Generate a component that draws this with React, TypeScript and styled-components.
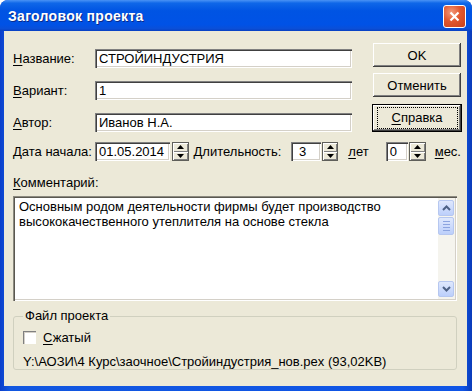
import React from "react";
import styled, { createGlobalStyle } from "styled-components";

const GlobalStyle = createGlobalStyle`
  html, body {
    margin: 0;
    padding: 0;
    background: #ffffff;
  }
  body {
    font-family: "Liberation Sans", Arial, sans-serif;
    font-size: 13px;
    color: #000;
  }
`;

const colors = {
  face: "#ECE9D8",
  shadow: "#808080",
  dark: "#404040",
  light: "#ffffff",
  groupLine: "#d0d0bf",
};

const Window = styled.div`
  width: 472px;
  height: 391px;
  box-sizing: border-box;
  display: flex;
  flex-direction: column;
  background: linear-gradient(to right, #0b3fcb 0%, #1257e0 2%, #0f55e6 98%, #0a3bb8 100%);
  border-radius: 8px 8px 0 0;
  overflow: hidden;
`;

const TitleBar = styled.div`
  height: 31px;
  flex-shrink: 0;
  display: flex;
  align-items: center;
  justify-content: space-between;
  padding: 0 6px 0 8px;
  background: linear-gradient(
    to bottom,
    #4a93f5 0%,
    #0f67e8 10%,
    #0054e3 35%,
    #0052e6 80%,
    #0a4fd8 92%,
    #0840c2 100%
  );
`;

const Title = styled.span`
  color: #fff;
  font-weight: bold;
  font-size: 14px;
  letter-spacing: 0.3px;
  text-shadow: 1px 1px 0 #0a2a8a;
`;

const CloseButton = styled.div`
  width: 21px;
  height: 21px;
  border: 1px solid #fff;
  border-radius: 3px;
  background: radial-gradient(circle at 35% 30%, #f39a7c 0%, #e2572f 45%, #c8401b 100%);
  display: flex;
  align-items: center;
  justify-content: center;
  margin-top: 2px;
`;

const Client = styled.div`
  flex: 1;
  margin: 0 5px 5px 4px;
  background: ${colors.face};
  padding: 12px 6px 0 9px;
  display: flex;
  flex-direction: column;
`;

const TopSection = styled.div`
  display: flex;
  gap: 21px;
`;

const Fields = styled.div`
  flex: 1;
  display: flex;
  flex-direction: column;
  gap: 14px;
  padding-top: 6px;
`;

const Row = styled.div`
  display: flex;
  align-items: center;
  height: 18px;
`;

const Label = styled.span<{ $width?: number }>`
  width: ${(p) => (p.$width ? `${p.$width}px` : "auto")};
  flex-shrink: 0;
  white-space: nowrap;
  line-height: 15px;
`;

const U = styled.span`
  text-decoration: underline;
  text-underline-offset: 2px;
`;

const Field = styled.div<{ $width?: number }>`
  ${(p) => (p.$width ? `width: ${p.$width}px;` : "flex: 1;")}
  height: 19px;
  box-sizing: border-box;
  background: #fff;
  padding: 2px 0 0 4px;
  white-space: nowrap;
  overflow: hidden;
  box-shadow: inset 1px 1px 0 ${colors.shadow}, inset 2px 2px 0 ${colors.dark},
    inset -1px -1px 0 ${colors.light}, inset -2px -2px 0 #d4d0c8;
`;

const Buttons = styled.div`
  width: 88px;
  display: flex;
  flex-direction: column;
  gap: 6px;
`;

const Button = styled.div<{ $focused?: boolean }>`
  height: 24px;
  box-sizing: border-box;
  display: flex;
  align-items: center;
  justify-content: center;
  background: ${colors.face};
  box-shadow: inset -1px -1px 0 ${colors.dark}, inset 1px 1px 0 ${colors.light},
    inset -2px -2px 0 ${colors.shadow};
  ${(p) =>
    p.$focused &&
    `
    outline: 1px solid #000;
    outline-offset: 0;
    margin-top: 2px;
    height: 26px;
  `}
`;

const FocusRing = styled.span`
  border: 1px dotted #000;
  padding: 2px 14px 3px;
`;

const DateRow = styled(Row)`
  margin-top: 11px;
  height: 19px;
`;

const Spin = styled.div<{ $gap?: number }>`
  width: 17px;
  height: 19px;
  margin-left: ${(p) => p.$gap ?? 1}px;
  display: flex;
  flex-direction: column;
  box-sizing: border-box;
  border: 1px solid #5f5f5a;
  background: ${colors.face};
`;

const SpinHalf = styled.div`
  flex: 1;
  display: flex;
  align-items: center;
  justify-content: center;
  box-shadow: inset 1px 1px 0 ${colors.light}, inset -1px -1px 0 ${colors.shadow};
`;

const Gap = styled.span<{ $w: number }>`
  display: inline-block;
  width: ${(p) => p.$w}px;
  flex-shrink: 0;
`;

const CommentLabel = styled.div`
  margin-top: 14px;
  line-height: 15px;
  margin-bottom: 6px;
`;

const TextBox = styled.div`
  height: 105px;
  margin-right: 4px;
  display: flex;
  background: #fff;
  box-sizing: border-box;
  padding: 2px;
  box-shadow: inset 1px 1px 0 #8c8a80, inset 2px 2px 0 #5a5850,
    inset -1px -1px 0 ${colors.light}, inset -2px -2px 0 #d4d0c8;
`;

const TextContent = styled.div`
  flex: 1;
  padding: 1px 4px;
  line-height: 15px;
`;

const ScrollBar = styled.div`
  width: 17px;
  display: flex;
  flex-direction: column;
  background: #f5f4ee;
  padding: 2px 0;
`;

const ScrollBtn = styled.div`
  width: 16px;
  height: 16px;
  box-sizing: border-box;
  border: 1px solid #b6c7f0;
  border-radius: 2px;
  background: linear-gradient(to bottom, #dfe8fd, #bccffb);
  display: flex;
  align-items: center;
  justify-content: center;
`;

const Thumb = styled(ScrollBtn)`
  height: 18px;
  margin-top: 1px;
  flex-direction: column;
  gap: 2px;
`;

const Grip = styled.span`
  width: 7px;
  height: 1px;
  background: #8ca4e0;
`;

const Track = styled.div`
  flex: 1;
`;

const Group = styled.fieldset`
  margin: 8px 4px 0 0;
  padding: 7px 9px 0;
  border: 1px solid ${colors.groupLine};
  border-radius: 3px;
  display: flex;
  flex-direction: column;
  gap: 9px;
`;

const Legend = styled.legend`
  padding: 0 2px;
  line-height: 14px;
`;

const CheckRow = styled.div`
  display: flex;
  align-items: center;
  gap: 7px;
  height: 15px;
`;

const CheckBox = styled.span`
  width: 13px;
  height: 13px;
  box-sizing: border-box;
  background: #fff;
  box-shadow: inset 1px 1px 0 ${colors.shadow}, inset 2px 2px 0 #d4d0c8,
    inset -1px -1px 0 ${colors.light};
`;

const PathText = styled.div`
  line-height: 15px;
  white-space: nowrap;
`;

const Chevron = ({ up }: { up?: boolean }) => (
  <svg width="9" height="6" viewBox="0 0 9 6">
    <path
      d={up ? "M1 5 L4.5 1.5 L8 5" : "M1 1 L4.5 4.5 L8 1"}
      stroke="#4d6185"
      strokeWidth="2"
      fill="none"
    />
  </svg>
);

const Tri = ({ up }: { up?: boolean }) => (
  <svg width="7" height="4" viewBox="0 0 7 4">
    <path d={up ? "M0 4 L3.5 0 L7 4 Z" : "M0 0 L3.5 4 L7 0 Z"} fill="#000" />
  </svg>
);

const Spinner = ({ gap }: { gap?: number }) => (
  <Spin $gap={gap}>
    <SpinHalf>
      <Tri up />
    </SpinHalf>
    <SpinHalf>
      <Tri />
    </SpinHalf>
  </Spin>
);

export default function App() {
  return (
    <>
      <GlobalStyle />
      <Window>
        <TitleBar>
          <Title>Заголовок проекта</Title>
          <CloseButton>
            <svg width="11" height="11" viewBox="0 0 11 11">
              <path d="M1.5 1.5 L9.5 9.5 M9.5 1.5 L1.5 9.5" stroke="#fff" strokeWidth="2.2" />
            </svg>
          </CloseButton>
        </TitleBar>
        <Client>
          <TopSection>
            <Fields>
              <Row>
                <Label $width={82}>
                  <U>Н</U>азвание:
                </Label>
                <Field>СТРОЙИНДУСТРИЯ</Field>
              </Row>
              <Row>
                <Label $width={82}>
                  <U>В</U>ариант:
                </Label>
                <Field>1</Field>
              </Row>
              <Row>
                <Label $width={82}>
                  <U>А</U>втор:
                </Label>
                <Field>Иванов Н.А.</Field>
              </Row>
            </Fields>
            <Buttons>
              <Button>OK</Button>
              <Button>Отменить</Button>
              <Button $focused>
                <FocusRing>
                  <U>С</U>правка
                </FocusRing>
              </Button>
            </Buttons>
          </TopSection>

          <DateRow>
            <Label $width={82}>
              <U>Д</U>ата начала:
            </Label>
            <Field $width={77}>01.05.2014</Field>
            <Spinner gap={2} />
            <Gap $w={5} />
            <Label>Длительность:</Label>
            <Gap $w={10} />
            <Field $width={30}>&nbsp;3</Field>
            <Spinner />
            <Gap $w={10} />
            <Label>
              <U>л</U>ет
            </Label>
            <Gap $w={17} />
            <Field $width={23}>0</Field>
            <Spinner />
            <Gap $w={9} />
            <Label>
              <U>м</U>ес.
            </Label>
          </DateRow>

          <CommentLabel>
            <U>К</U>омментарий:
          </CommentLabel>
          <TextBox>
            <TextContent>
              Основным родом деятельности фирмы будет производство
              <br />
              высококачественного утеплителя на основе стекла
            </TextContent>
            <ScrollBar>
              <ScrollBtn>
                <Chevron up />
              </ScrollBtn>
              <Thumb>
                <Grip />
                <Grip />
                <Grip />
                <Grip />
              </Thumb>
              <Track />
              <ScrollBtn>
                <Chevron />
              </ScrollBtn>
            </ScrollBar>
          </TextBox>

          <Group>
            <Legend>Файл проекта</Legend>
            <CheckRow>
              <CheckBox />
              <span>
                <U>С</U>жатый
              </span>
            </CheckRow>
            <PathText>Y:\АОЗИ\4 Курс\заочное\Стройиндустрия_нов.pex (93,02KB)</PathText>
          </Group>
        </Client>
      </Window>
    </>
  );
}
